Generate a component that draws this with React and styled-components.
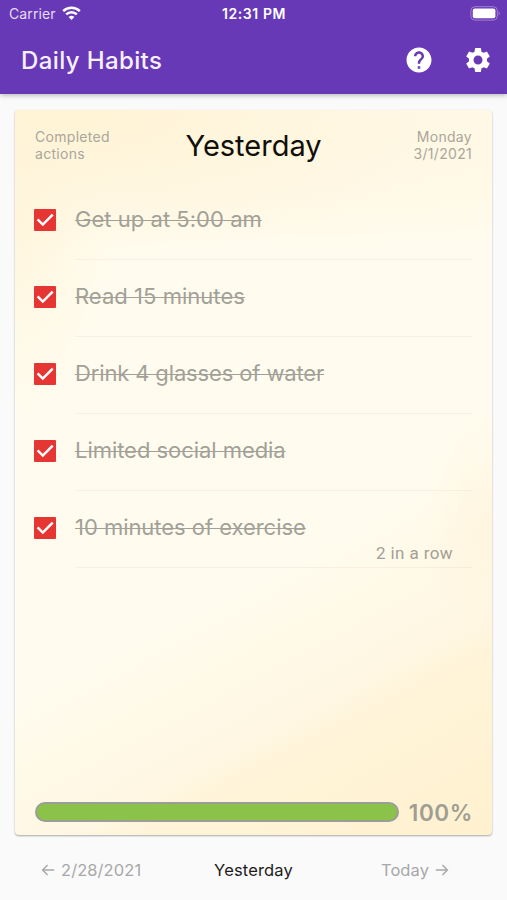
import React from 'react';
import styled, { createGlobalStyle } from 'styled-components';
import { MdHelp, MdSettings } from 'react-icons/md';

const habits = [
  { name: 'Get up at 5:00 am', spacing: '0.03px' },
  { name: 'Read 15 minutes', spacing: '0.03px' },
  { name: 'Drink 4 glasses of water', spacing: '-0.14px' },
  { name: 'Limited social media', spacing: '-0.05px' },
  { name: '10 minutes of exercise', spacing: '-0.04px', streak: '2 in a row' },
];

const GlobalStyle = createGlobalStyle`
  * {
    box-sizing: border-box;
  }
  body {
    margin: 0;
    background: #fafafa;
    font-family: Inter, 'Liberation Sans', sans-serif;
  }
  ul {
    list-style: none;
    margin: 0;
    padding: 0;
  }
  svg {
    display: block;
  }
`;

const Screen = styled.div`
  display: flex;
  flex-direction: column;
  height: 900px;
  overflow: hidden;
`;
const Header = styled.header`
  height: 94px;
  flex: none;
  background: #6839b6;
  color: #fff;
  box-shadow: 0 1px 5px rgba(0, 0, 0, 0.3);
`;
const StatusBar = styled.div`
  display: grid;
  grid-template-columns: 1fr auto 1fr;
  align-items: center;
  height: 27px;
  padding: 0 6px 0 7px;
  font-size: 14px;
  line-height: 27px;
`;
const Carrier = styled.div`
  display: flex;
  align-items: center;
  gap: 6px;
  margin-left: 2px;
  color: #e6dcf5;
  letter-spacing: 0.1px;
`;
const Clock = styled.div`
  font-weight: 600;
  letter-spacing: 0.6px;
`;
const Battery = styled.div`
  justify-self: end;
`;
const AppBar = styled.div`
  display: flex;
  align-items: center;
  height: 66px;
  padding: 0 14px 0 21px;
`;
const Title = styled.h1`
  flex: 1;
  margin: 0;
  font-size: 24px;
  font-weight: 500;
  letter-spacing: 0.38px;
  color: #f6f1fc;
`;
const Actions = styled.div`
  display: flex;
  gap: 29px;
  font-size: 30px;
`;
const Card = styled.main`
  display: flex;
  flex-direction: column;
  height: 725px;
  flex: none;
  margin: 16px 15px 0 15px;
  padding: 17px 20px 13px;
  border-radius: 4px;
  background:
    radial-gradient(ellipse 380px 150px at 12% 0%, rgba(255, 243, 212, 0.95), rgba(255, 245, 221, 0.75) 55%, transparent),
    radial-gradient(ellipse 430px 110px at 65% 4%, rgba(255, 246, 224, 0.8), rgba(255, 246, 224, 0.55) 60%, transparent),
    radial-gradient(ellipse 100px 230px at 0% 10%, rgba(255, 243, 214, 0.9), transparent),
    radial-gradient(ellipse 70px 125px at 100% 58%, rgba(255, 244, 220, 0.8), transparent),
    linear-gradient(152deg, transparent 61%, #fff9e8 68%, #fff7e3 77%, #fff4d9 81%, #fff1cf 100%),
    #fffcef;
  box-shadow: 0 1px 2px rgba(0, 0, 0, 0.33);
`;
const CardHeader = styled.div`
  display: grid;
  grid-template-columns: 110px 1fr 110px;
  height: 54px;
`;
const Caption = styled.div`
  padding-top: 1px;
  font-size: 14px;
  line-height: 17px;
  letter-spacing: 0.3px;
  color: #aaa69a;
  text-align: ${({ $align }) => $align || 'left'};
`;
const Day = styled.h2`
  margin: 0;
  font-size: 29px;
  font-weight: 400;
  line-height: 37px;
  text-align: center;
  color: #100f0a;
`;
const Habit = styled.li`
  height: 77px;
`;
const HabitRow = styled.div`
  display: flex;
  align-items: center;
  position: relative;
  height: 77px;
`;
const Check = styled.span`
  flex: none;
  width: 22px;
  height: 22px;
  margin: 0 19px 0 -1px;
  background: #e53633;
  border-radius: 1px;
`;
const HabitName = styled.span`
  padding-bottom: 2px;
  font-size: 22px;
  line-height: 26px;
  color: #a2a097;
  letter-spacing: ${({ $spacing }) => $spacing};
  text-decoration: line-through;
  text-decoration-thickness: 1px;
`;
const Divider = styled.div`
  height: 1px;
  margin: 1px 0 0 40px;
  background: rgba(90, 80, 50, 0.06);
`;
const Streak = styled.span`
  position: absolute;
  right: 19px;
  bottom: 3px;
  font-family: Roboto, sans-serif;
  font-size: 17px;
  line-height: 20px;
  letter-spacing: 0.4px;
  color: #a39f94;
`;
const Progress = styled.div`
  display: flex;
  align-items: center;
  justify-content: space-between;
  height: 20px;
  margin-top: auto;
`;
const Track = styled.div`
  width: 364px;
  height: 20px;
  border: 2px solid #9c9c98;
  border-radius: 10px;
  background: #9c9c98;
`;
const Fill = styled.div`
  height: 100%;
  border-radius: 8px;
  background: #8bc34a;
`;
const Percent = styled.div`
  padding-top: 1px;
  font-size: 22.5px;
  font-weight: 600;
  line-height: 20px;
  letter-spacing: 0.6px;
  margin-right: -1px;
  color: #a09d94;
`;
const Pager = styled.nav`
  display: grid;
  grid-template-columns: 1fr auto 1fr;
  align-items: center;
  height: 65px;
  padding: 4px 41px 0;
  font-size: 16.5px;
`;
const PagerLink = styled.a`
  display: flex;
  align-items: center;
  gap: 6px;
  justify-self: ${({ $side }) => $side};
  margin-right: ${({ $side }) => ($side === 'end' ? '17px' : 0)};
  letter-spacing: ${({ $current }) => ($current ? '0.15px' : '0.08px')};
  color: ${({ $current }) => ($current ? '#1c1c1c' : '#a8a8a8')};
`;

const Wifi = () => (
  <svg width="19" height="15" viewBox="0 0 19 15" fill="none" stroke="#fff" strokeWidth="2.5">
    <path d="M1.2 5.2a12 12 0 0 1 16.6 0" />
    <path d="M4.2 8.4a7.6 7.6 0 0 1 10.6 0" />
    <path d="M6.6 11.1a4.3 4.3 0 0 1 5.8 0L9.5 14z" fill="#fff" stroke="none" />
  </svg>
);

const BatteryIcon = () => (
  <svg width="31" height="15" viewBox="0 0 31 15">
    <rect x="0.9" y="0.7" width="26.4" height="13.4" rx="4" fill="none" stroke="#a07fd2" strokeWidth="1" />
    <rect x="2.8" y="2.5" width="22.6" height="9.8" rx="2" fill="#fff" />
    <path d="M28.6 5.2c1.5.6 1.5 3.8 0 4.4z" fill="#a07fd2" />
  </svg>
);

const CheckMark = () => (
  <svg width="22" height="22" viewBox="0 0 22 22" fill="none" stroke="#fff" strokeWidth="2.5">
    <path d="M3.6 10.4l5.2 5.2L18.7 5.6" />
  </svg>
);

const Arrow = ({ left }) => (
  <svg width="14" height="14" viewBox="0 0 14 14" fill="none" stroke="currentColor" strokeWidth="1.4">
    <path d={left ? 'M13.2 7H1.6M6.6 2.1L1.6 7l5 4.9' : 'M.8 7h11.6M7.4 2.1l5 4.9-5 4.9'} />
  </svg>
);

const App = () => (
  <Screen>
    <GlobalStyle />
    <Header>
      <StatusBar>
        <Carrier>Carrier <Wifi /></Carrier>
        <Clock>12:31 PM</Clock>
        <Battery><BatteryIcon /></Battery>
      </StatusBar>
      <AppBar>
        <Title>Daily Habits</Title>
        <Actions>
          <MdHelp />
          <MdSettings />
        </Actions>
      </AppBar>
    </Header>
    <Card>
      <CardHeader>
        <Caption>Completed<br />actions</Caption>
        <Day>Yesterday</Day>
        <Caption $align="right">Monday<br />3/1/2021</Caption>
      </CardHeader>
      <ul>
        {habits.map(({ name, spacing, streak }) => (
          <Habit key={name}>
            <HabitRow>
              <Check><CheckMark /></Check>
              <HabitName $spacing={spacing}>{name}</HabitName>
              {streak && <Streak>{streak}</Streak>}
            </HabitRow>
            <Divider />
          </Habit>
        ))}
      </ul>
      <Progress>
        <Track>
          <Fill style={{ width: '100%' }} />
        </Track>
        <Percent>100%</Percent>
      </Progress>
    </Card>
    <Pager>
      <PagerLink $side="start"><Arrow left /> 2/28/2021</PagerLink>
      <PagerLink $side="center" $current>Yesterday</PagerLink>
      <PagerLink $side="end">Today <Arrow /></PagerLink>
    </Pager>
  </Screen>
);

export default App;
